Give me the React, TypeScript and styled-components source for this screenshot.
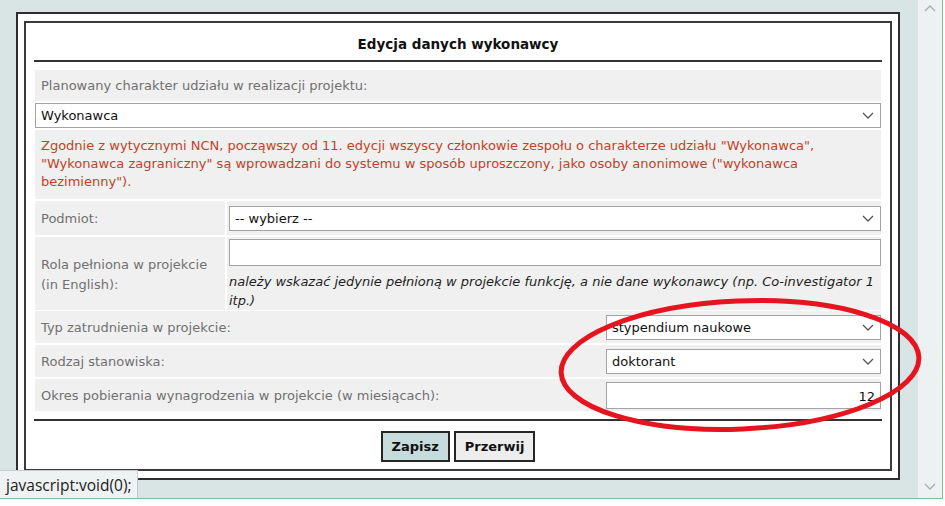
import React from 'react'
import styled, { createGlobalStyle } from 'styled-components'

const GlobalStyle = createGlobalStyle`
  body {
    margin: 0;
    background: #fff;
    font-family: "DejaVu Sans", Verdana, sans-serif;
    font-size: 13px;
  }
`

const Chevron = ({ up }: { up?: boolean }) => (
  <svg width="12" height="7" viewBox="0 0 12 7">
    <polyline
      points={up ? '1,6 6,1 11,6' : '1,1 6,6 11,1'}
      fill="none"
      stroke="currentColor"
      strokeWidth="1.3"
    />
  </svg>
)

interface SelectProps {
  value: string
}

const Select = ({ value }: SelectProps) => (
  <SelectBox>
    <span>{value}</span>
    <Chevron />
  </SelectBox>
)

const App = (): React.ReactElement => {
  return (
    <>
      <GlobalStyle />
      <Viewport>
        <Canvas>
          <Dialog>
            <Inner>
              <Title>Edycja danych wykonawcy</Title>
              <Form>
                <FullRow>Planowany charakter udziału w realizacji projektu:</FullRow>
                <Select value="Wykonawca" />
                <Notice>
                  Zgodnie z wytycznymi NCN, począwszy od 11. edycji wszyscy członkowie zespołu o charakterze udziału "Wykonawca",<br />
                  "Wykonawca zagraniczny" są wprowadzani do systemu w sposób uproszczony, jako osoby anonimowe ("wykonawca<br />
                  bezimienny").
                </Notice>
                <SplitRow $height={34}>
                  <LabelCell>Podmiot:</LabelCell>
                  <ValueCell>
                    <Select value="-- wybierz --" />
                  </ValueCell>
                </SplitRow>
                <SplitRow $height={72}>
                  <LabelCell>Rola pełniona w projekcie<br />(in English):</LabelCell>
                  <ValueCell $top>
                    <TextBox />
                    <Hint>
                      należy wskazać jedynie pełnioną w projekcie funkcję, a nie dane wykonawcy (np. Co-investigator 1 itp.)
                    </Hint>
                  </ValueCell>
                </SplitRow>
                <InlineRow>
                  <span>Typ zatrudnienia w projekcie:</span>
                  <Narrow>
                    <Select value="stypendium naukowe" />
                  </Narrow>
                </InlineRow>
                <InlineRow>
                  <span>Rodzaj stanowiska:</span>
                  <Narrow>
                    <Select value="doktorant" />
                  </Narrow>
                </InlineRow>
                <InlineRow>
                  <span>Okres pobierania wynagrodzenia w projekcie (w miesiącach):</span>
                  <Narrow>
                    <TextBox $align="right">12</TextBox>
                  </Narrow>
                </InlineRow>
              </Form>
              <Divider />
              <Buttons>
                <Button $primary>Zapisz</Button>
                <Button>Przerwij</Button>
              </Buttons>
            </Inner>
          </Dialog>
        </Canvas>
        <Scrollbar>
          <Chevron up />
          <Chevron />
        </Scrollbar>
        <StatusTip>javascript:void(0);</StatusTip>
        <Annotation width="943" height="499" viewBox="0 0 943 499">
          <ellipse
            cx="740"
            cy="365"
            rx="179"
            ry="64"
            transform="rotate(-2.5 740 365)"
            fill="none"
            stroke="#e5141f"
            strokeWidth="5"
          />
        </Annotation>
      </Viewport>
    </>
  )
}

export default App

const Viewport = styled.div`
  position: relative;
  display: flex;
  width: 943px;
  height: 499px;
  box-sizing: border-box;
  background: #d9e4e4;
  border-right: 1px solid #79c291;
  border-bottom: 1px solid #79c291;
  overflow: hidden;
`
const Canvas = styled.div`
  flex: 1;
  padding: 12px 0 0 16px;
`
const Scrollbar = styled.div`
  width: 24px;
  background: #edf1f1;
  color: #a7adad;
  display: flex;
  flex-direction: column;
  align-items: center;
  justify-content: space-between;
  padding: 5px 0 8px;
  box-sizing: border-box;
`
const Dialog = styled.div`
  width: 884px;
  height: 468px;
  box-sizing: border-box;
  background: #fff;
  border: 2px solid #2e2e2e;
  padding: 7px 6px;
`
const Inner = styled.div`
  height: 100%;
  box-sizing: border-box;
  border: 2px solid #3a3a3a;
  display: flex;
  flex-direction: column;
`
const Title = styled.div`
  margin: 0 8px;
  padding: 14px 0 8px;
  line-height: 15px;
  text-align: center;
  font-size: 13.5px;
  font-weight: bold;
  color: #111;
  border-bottom: 2px solid #333;
`
const Form = styled.div`
  margin: 8px 9px 0;
  display: flex;
  flex-direction: column;
  gap: 2px;
`
const FullRow = styled.div`
  height: 31px;
  display: flex;
  align-items: center;
  padding: 0 6px;
  background: #f0f0f0;
  color: #707070;
`
const SelectBox = styled.div`
  height: 25px;
  box-sizing: border-box;
  border: 1px solid #a3a3a3;
  background: #fff;
  display: flex;
  align-items: center;
  justify-content: space-between;
  padding: 0 6px 0 5px;
  color: #111;
  svg {
    color: #555;
  }
`
const TextBox = styled.div<{ $align?: 'left' | 'right' }>`
  height: 27px;
  box-sizing: border-box;
  border: 1px solid #a3a3a3;
  background: #fff;
  display: flex;
  align-items: center;
  justify-content: ${p => (p.$align === 'right' ? 'flex-end' : 'flex-start')};
  padding: 2px 5px 0;
  color: #111;
`
const Notice = styled.div`
  padding: 7px 6px 8px;
  line-height: 18px;
  background: #f0f0f0;
  color: #bf4328;
`
const SplitRow = styled.div<{ $height: number }>`
  display: grid;
  grid-template-columns: 190px 1fr;
  gap: 2px;
  height: ${p => p.$height}px;
`
const LabelCell = styled.div`
  display: flex;
  align-items: center;
  padding: 2px 6px 0;
  background: #f0f0f0;
  color: #707070;
  line-height: 20px;
`
const ValueCell = styled.div<{ $top?: boolean }>`
  display: flex;
  flex-direction: column;
  justify-content: ${p => (p.$top ? 'flex-start' : 'center')};
  padding: ${p => (p.$top ? '2px 0 0 2px' : '0 0 0 2px')};
  background: #f0f0f0;
`
const Hint = styled.div`
  margin-top: 6px;
  font-style: italic;
  line-height: 19px;
  color: #1e1e1e;
`
const InlineRow = styled.div`
  height: 32px;
  display: flex;
  align-items: center;
  justify-content: space-between;
  padding-left: 6px;
  background: #f0f0f0;
  color: #707070;
`
const Narrow = styled.div`
  width: 275px;
`
const Divider = styled.div`
  margin: 8px 8px 0;
  border-top: 2px solid #333;
`
const Buttons = styled.div`
  display: flex;
  justify-content: center;
  gap: 4px;
  margin-top: 10px;
`
const Button = styled.button<{ $primary?: boolean }>`
  height: 31px;
  padding: 0 9px;
  border: 2px solid #262626;
  background: ${p => (p.$primary ? '#c6dcdc' : '#ededed')};
  font-family: "DejaVu Sans", Verdana, sans-serif;
  font-size: 13px;
  font-weight: bold;
  color: #111;
`
const StatusTip = styled.div`
  position: absolute;
  left: 0;
  bottom: 0;
  height: 28px;
  width: 138px;
  box-sizing: border-box;
  display: flex;
  align-items: center;
  padding-left: 6px;
  background: #eef2f2;
  border-top: 1px solid #c9cccc;
  border-right: 1px solid #c9cccc;
  font-family: "Open Sans", sans-serif;
  font-size: 15.5px;
  color: #222;
`
const Annotation = styled.svg`
  position: absolute;
  left: 0;
  top: 0;
  pointer-events: none;
`
